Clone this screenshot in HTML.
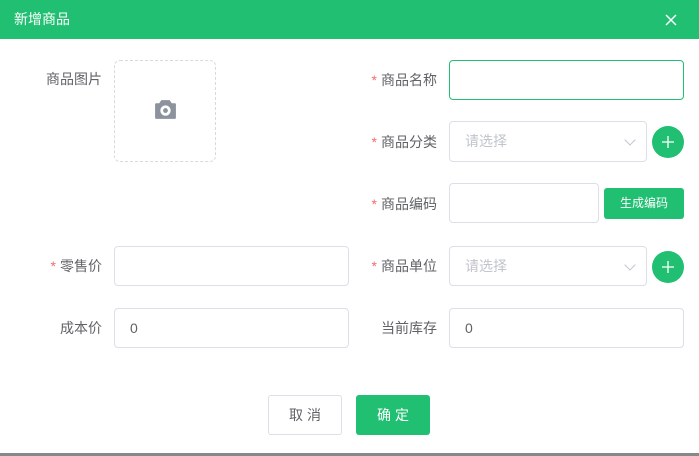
<!DOCTYPE html><html><head><meta charset="utf-8"><style>
*{box-sizing:border-box;margin:0;padding:0}
body{width:699px;height:456px;background:#fff;font-family:"Liberation Sans","Noto Sans CJK SC",sans-serif;font-size:14px;color:#606266;position:relative;overflow:hidden}
.hd{position:absolute;left:0;top:0;width:699px;height:39px;background:#20bf72;color:#fff;font-size:14px;line-height:39px;padding-left:14px}
.a{position:absolute}
.lb{position:absolute;text-align:right;line-height:20px;font-size:14px;color:#606266}
.lb i{color:#f56c6c;font-style:normal;margin-right:4px}
.in{position:absolute;border:1px solid #dcdfe6;border-radius:4px;background:#fff;padding-left:15px;line-height:38px;color:#606266}
.ph{color:#c0c4cc}
.chev{position:absolute;right:12px;top:14px;width:8px;height:8px;border-right:1px solid #c0c4cc;border-bottom:1px solid #c0c4cc;transform:rotate(45deg)}
.plus{position:absolute;width:32px;height:32px;border-radius:50%;background:#20bf72}
.btn{position:absolute;border-radius:3px;text-align:center;font-size:14px}
</style></head><body>
<div class="hd">新增商品</div>
<svg class="a" style="left:665px;top:14px" width="12" height="12" viewBox="0 0 12 12"><path d="M1 1L11 11M11 1L1 11" stroke="#fff" stroke-width="1.5"/></svg>
<div class="lb" style="left:20px;top:69px;width:82px">商品图片</div>
<div class="a" style="left:114px;top:60px;width:102px;height:102px;border:1px dashed #d9d9d9;border-radius:6px">
<svg style="position:absolute;left:38px;top:37px" width="25" height="23" viewBox="0 0 24 22"><path d="M8 2h8l2 3h3a1 1 0 0 1 1 1v13a1 1 0 0 1-1 1H3a1 1 0 0 1-1-1V6a1 1 0 0 1 1-1h3z" fill="#8c939d"/><circle cx="12" cy="12" r="5" fill="#fff"/><circle cx="12" cy="12" r="2.3" fill="#8c939d"/></svg></div>
<div class="lb" style="left:340px;top:70px;width:97px"><i>*</i>商品名称</div>
<div class="in" style="left:449px;top:60px;width:235px;height:40px;border-color:#20bf72"></div>
<div class="lb" style="left:340px;top:132px;width:97px"><i>*</i>商品分类</div>
<div class="in" style="left:449px;top:121px;width:198px;height:41px"><span class="ph">请选择</span><span class="chev"></span></div>
<div class="plus" style="left:652px;top:126px"><svg width="32" height="32"><path d="M16 10v12M10 16h12" stroke="#fff" stroke-width="1.3"/></svg></div>
<div class="lb" style="left:340px;top:194px;width:97px"><i>*</i>商品编码</div>
<div class="in" style="left:449px;top:183px;width:150px;height:40px"></div>
<div class="btn" style="left:604px;top:188px;width:80px;height:31px;line-height:31px;background:#20bf72;color:#fff;font-size:12px">生成编码</div>
<div class="lb" style="left:20px;top:256px;width:82px"><i>*</i>零售价</div>
<div class="in" style="left:114px;top:246px;width:235px;height:40px"></div>
<div class="lb" style="left:340px;top:256px;width:97px"><i>*</i>商品单位</div>
<div class="in" style="left:449px;top:246px;width:198px;height:40px"><span class="ph">请选择</span><span class="chev"></span></div>
<div class="plus" style="left:652px;top:251px"><svg width="32" height="32"><path d="M16 10v12M10 16h12" stroke="#fff" stroke-width="1.3"/></svg></div>
<div class="lb" style="left:20px;top:318px;width:82px">成本价</div>
<div class="in" style="left:114px;top:308px;width:235px;height:40px">0</div>
<div class="lb" style="left:340px;top:318px;width:97px">当前库存</div>
<div class="in" style="left:449px;top:308px;width:235px;height:40px">0</div>
<div class="btn" style="left:268px;top:395px;width:74px;height:40px;line-height:38px;border:1px solid #dcdfe6;color:#606266;letter-spacing:4px;padding-left:4px">取消</div>
<div class="btn" style="left:356px;top:395px;width:74px;height:40px;line-height:40px;background:#20bf72;color:#fff;letter-spacing:4px;padding-left:4px">确定</div>
<div class="a" style="left:0;top:453px;width:699px;height:3px;background:#888"></div>
</body></html>
